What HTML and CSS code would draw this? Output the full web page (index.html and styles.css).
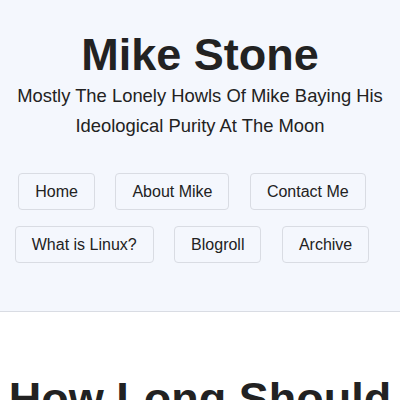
FILE: index.html
```html
<!DOCTYPE html>
<html lang="en">
<head>
<meta charset="utf-8">
<title>Mike Stone</title>
<link rel="stylesheet" href="styles.css">
</head>
<body>
<header class="site-header">
  <h1 class="site-title">Mike Stone</h1>
  <p class="tagline">Mostly The Lonely Howls Of Mike Baying His Ideological Purity At The Moon</p>
  <nav>
    <ul class="nav">
      <li><a href="#">Home</a></li>
      <li><a href="#">About Mike</a></li>
      <li><a href="#">Contact Me</a></li>
      <li><a href="#">What is Linux?</a></li>
      <li><a href="#">Blogroll</a></li>
      <li><a href="#">Archive</a></li>
    </ul>
  </nav>
</header>
<main class="content">
  <h2 class="post-title">How Long Should I Keep My Computer?</h2>
</main>
</body>
</html>
```
FILE: styles.css
```css
html, body {
  margin: 0;
  padding: 0;
  background: #ffffff;
  color: #222222;
  font-family: "Liberation Sans", Arial, sans-serif;
}
.site-header {
  background: #f4f7fd;
  border-bottom: 1px solid #d9dce3;
  text-align: center;
  padding: 29px 0 48px;
}
.site-title {
  margin: 0;
  font-size: 45px;
  line-height: 52px;
  font-weight: bold;
}
.tagline {
  margin: 0;
  font-size: 18.4px;
  line-height: 30px;
}
.nav {
  list-style: none;
  margin: 32px 0 0;
  padding: 0;
  display: flex;
  flex-wrap: wrap;
  justify-content: center;
  gap: 16px 4.45px;
}
.nav li {
  margin-right: 16px;
}
.nav a {
  display: block;
  padding: 8px 16px;
  border: 1px solid #d9dce3;
  border-radius: 4px;
  color: #222222;
  text-decoration: none;
  font-size: 16px;
  line-height: 19px;
}
.content {
  padding: 60px 0 0;
  text-align: center;
}
.post-title {
  margin: 0;
  font-size: 45px;
  line-height: 54px;
  font-weight: bold;
}
```
